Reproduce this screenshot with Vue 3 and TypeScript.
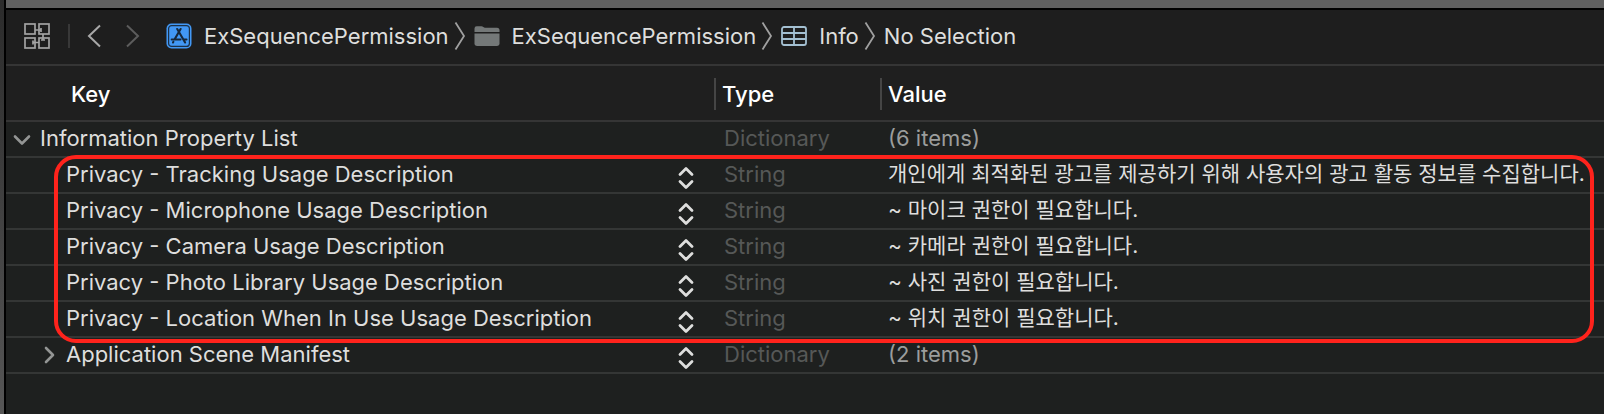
<script setup lang="ts">
import { ref } from 'vue'

interface PlistRow {
  key: string
  type: string
  value: string
}

const expanded = ref(true)

const crumbs: { label: string; icon: 'app' | 'folder' | 'table' | null }[] = [
  { label: 'ExSequencePermission', icon: 'app' },
  { label: 'ExSequencePermission', icon: 'folder' },
  { label: 'Info', icon: 'table' },
  { label: 'No Selection', icon: null },
]

const privacyRows: PlistRow[] = [
  { key: 'Privacy - Tracking Usage Description', type: 'String', value: '개인에게 최적화된 광고를 제공하기 위해 사용자의 광고 활동 정보를 수집합니다.' },
  { key: 'Privacy - Microphone Usage Description', type: 'String', value: '~ 마이크 권한이 필요합니다.' },
  { key: 'Privacy - Camera Usage Description', type: 'String', value: '~ 카메라 권한이 필요합니다.' },
  { key: 'Privacy - Photo Library Usage Description', type: 'String', value: '~ 사진 권한이 필요합니다.' },
  { key: 'Privacy - Location When In Use Usage Description', type: 'String', value: '~ 위치 권한이 필요합니다.' },
]
</script>

<template>
  <div class="window">
    <aside class="edge"></aside>
    <main class="editor">
      <div class="tabstrip"></div>
      <nav class="jumpbar" aria-label="Jump bar">
        <button class="tool" type="button" aria-label="Related items">
          <svg width="26" height="26" viewBox="0 0 26 26" fill="none" stroke="#a3a3a3" stroke-width="1.7">
            <rect x="1" y="1" width="10" height="10" />
            <rect x="15" y="1" width="10" height="10" />
            <rect x="1" y="15" width="10" height="10" />
            <rect x="15" y="15" width="10" height="10" />
            <path d="M11 7h6.500M17 5v4M19 11v6.500M17 17h4M15 19.500H9M9 17.500v4" />
          </svg>
        </button>
        <span class="divider"></span>
        <button class="tool back" type="button" aria-label="Back">
          <svg width="14" height="24" viewBox="0 0 14 24" fill="none" stroke="#a8a8a8" stroke-width="2"><path d="M13 1.500 2 12l11 10.500" /></svg>
        </button>
        <button class="tool forward" type="button" aria-label="Forward">
          <svg width="14" height="24" viewBox="0 0 14 24" fill="none" stroke="#5c5c5c" stroke-width="2"><path d="M1 1.500 12 12 1 22.500" /></svg>
        </button>
        <ol class="crumbs">
          <li v-for="(crumb, i) in crumbs" :key="i">
            <svg v-if="i > 0" class="sep" width="12" height="28" viewBox="0 0 12 28" fill="none" stroke="#a0a0a0" stroke-width="1.800"><path d="M1.500.500 10 14 1.500 27.500" /></svg>
            <button class="crumb" type="button">
              <svg v-if="crumb.icon === 'app'" width="26" height="26" viewBox="0 0 26 26">
                <rect x=".5" y=".5" width="25" height="25" rx="5" fill="#4298f5" />
                <rect x="2.600" y="2.600" width="20.800" height="20.800" rx="3" fill="none" stroke="#1c3148" stroke-width="1.200" />
                <g fill="none" stroke="#17283a" stroke-width="2.100" stroke-linecap="round">
                  <path d="M14.600 6 8.800 16M11.200 6l7.900 13.500M5.700 16.500h8.800M17.600 16.500h2.900M7.400 18.800l-.4.7" />
                </g>
              </svg>
              <svg v-else-if="crumb.icon === 'folder'" width="26" height="20" viewBox="0 0 26 20" fill="#747878">
                <path d="M.5 6V2.500Q.5.300 2.700.300H7.500Q8.500.300 9.300 1T11 1.800H23Q25.500 1.800 25.500 4.300V6Z" />
                <path d="M.5 7.500h25V17.300Q25.500 20 22.800 20H3.200Q.5 20 .5 17.300Z" />
              </svg>
              <svg v-else-if="crumb.icon === 'table'" width="26" height="20" viewBox="0 0 26 20" fill="none" stroke="#a4c0d2" stroke-width="1.800">
                <rect x="1" y="1" width="24" height="18" rx="2" />
                <path d="M1 7h24M1 13h24M13 1v18" />
              </svg>
              <span>{{ crumb.label }}</span>
            </button>
          </li>
        </ol>
      </nav>

      <table class="plist">
        <colgroup>
          <col class="col-key" />
          <col class="col-type" />
          <col />
        </colgroup>
        <thead>
          <tr>
            <th scope="col"><span class="head first">Key</span></th>
            <th scope="col"><span class="head">Type</span></th>
            <th scope="col"><span class="head">Value</span></th>
          </tr>
        </thead>
        <tbody>
          <tr>
            <td>
              <div class="key root">
                <button class="disclosure" type="button" aria-label="Toggle Information Property List" :aria-expanded="expanded" @click="expanded = !expanded">
                  <svg width="18" height="18" viewBox="0 0 18 18" fill="none" stroke="#939594" stroke-width="2.600" stroke-linecap="round" stroke-linejoin="round">
                    <path v-if="expanded" d="M2 6.500l7 7 7-7" />
                    <path v-else d="M6 2l7 7-7 7" />
                  </svg>
                </button>
                <span>Information Property List</span>
              </div>
            </td>
            <td class="type">Dictionary</td>
            <td class="count">(6 items)</td>
          </tr>
        </tbody>
        <tbody v-if="expanded" class="highlighted">
          <tr v-for="row in privacyRows" :key="row.key">
            <td>
              <div class="key child">
                <span>{{ row.key }}</span>
                <button class="stepper" type="button" :aria-label="`Choose key for ${row.key}`">
                  <svg width="16" height="24" viewBox="0 0 16 24" fill="none" stroke="#dededd" stroke-width="2.800" stroke-linecap="round" stroke-linejoin="round"><path d="M2 8.500 8 2.500l6 6M2 15.500l6 6 6-6" /></svg>
                </button>
              </div>
            </td>
            <td class="type">{{ row.type }}</td>
            <td class="value">{{ row.value }}</td>
          </tr>
        </tbody>
        <tbody v-if="expanded">
          <tr>
            <td>
              <div class="key branch">
                <button class="disclosure" type="button" aria-label="Expand Application Scene Manifest" aria-expanded="false">
                  <svg width="18" height="18" viewBox="0 0 18 18" fill="none" stroke="#939594" stroke-width="2.600" stroke-linecap="round" stroke-linejoin="round"><path d="M6 2l7 7-7 7" /></svg>
                </button>
                <span>Application Scene Manifest</span>
                <button class="stepper" type="button" aria-label="Choose key for Application Scene Manifest">
                  <svg width="16" height="24" viewBox="0 0 16 24" fill="none" stroke="#dededd" stroke-width="2.800" stroke-linecap="round" stroke-linejoin="round"><path d="M2 8.500 8 2.500l6 6M2 15.500l6 6 6-6" /></svg>
                </button>
              </div>
            </td>
            <td class="type">Dictionary</td>
            <td class="count">(2 items)</td>
          </tr>
        </tbody>
      </table>
    </main>
  </div>
</template>

<style>
body {
  margin: 0;
  background: #1e201f;
}
</style>

<style scoped>
.window {
  display: flex;
  min-height: 100vh;
  font-family: Inter, "Noto Sans CJK KR", sans-serif;
  font-size: 22px;
  line-height: 32px;
  color: #dededd;
}
.edge {
  flex: none;
  width: 4px;
  border-right: 2px solid #000;
  background: linear-gradient(#2b2b2b, #3c3c3c 40%, #565656);
}
.editor {
  flex: 1;
  min-width: 0;
  background: #1e201f;
}
.tabstrip {
  height: 8px;
  background: #606060;
  border-bottom: 2px solid #000;
}
button {
  display: flex;
  align-items: center;
  padding: 0;
  border: 0;
  background: none;
  color: inherit;
  font: inherit;
}
svg {
  display: block;
  flex: none;
}
.jumpbar {
  display: flex;
  align-items: center;
  box-sizing: border-box;
  height: 56px;
  padding: 0 0 2px 18px;
  background: #1e1e1e;
  border-bottom: 2px solid #353535;
}
.divider {
  width: 2px;
  height: 24px;
  margin: 0 17px 0 18px;
  background: #383838;
}
.forward {
  margin-left: 25px;
}
.crumbs {
  display: flex;
  margin: 0 0 0 26px;
  padding: 0;
  list-style: none;
  white-space: nowrap;
}
.crumbs li {
  display: flex;
  align-items: center;
}
.crumb {
  gap: 12px;
}
.sep {
  margin: 0 8px 0 5px;
}
.plist {
  width: 100%;
  table-layout: fixed;
  border-spacing: 0;
  white-space: nowrap;
}
.col-key {
  width: 708px;
}
.col-type {
  width: 166px;
}
th {
  box-sizing: border-box;
  height: 56px;
  padding: 2px 0 0;
  background: #1f1f1f;
  border-bottom: 2px solid #353535;
  text-align: left;
  font-weight: 500;
  color: #fff;
}
.head {
  display: block;
  padding-left: 6px;
  border-left: 2px solid #454545;
}
.head.first {
  padding-left: 65px;
  border: 0;
}
td {
  height: 34px;
  padding: 0;
  border-bottom: 2px solid #343635;
  vertical-align: top;
}
.key {
  display: flex;
  height: 34px;
}
.root {
  padding-left: 7px;
}
.child {
  padding-left: 60px;
}
.branch {
  padding-left: 34px;
}
.disclosure {
  width: 18px;
  height: 34px;
  margin-right: 8px;
}
.root .disclosure {
  margin-right: 9px;
}
.stepper {
  height: 32px;
  margin: 0 20px 0 auto;
  align-items: flex-end;
}
.type {
  padding-left: 10px;
  color: #565857;
}
.count {
  padding-left: 8px;
  color: #9b9d9c;
}
.value {
  padding-left: 8px;
  font-size: 21px;
}
.highlighted {
  position: relative;
}
/* Callout ring around the privacy keys */
.highlighted::after {
  content: "";
  position: absolute;
  inset: -3px 10px -5px 48px;
  border: 4px solid #ff231c;
  border-radius: 22px;
  pointer-events: none;
}
</style>
